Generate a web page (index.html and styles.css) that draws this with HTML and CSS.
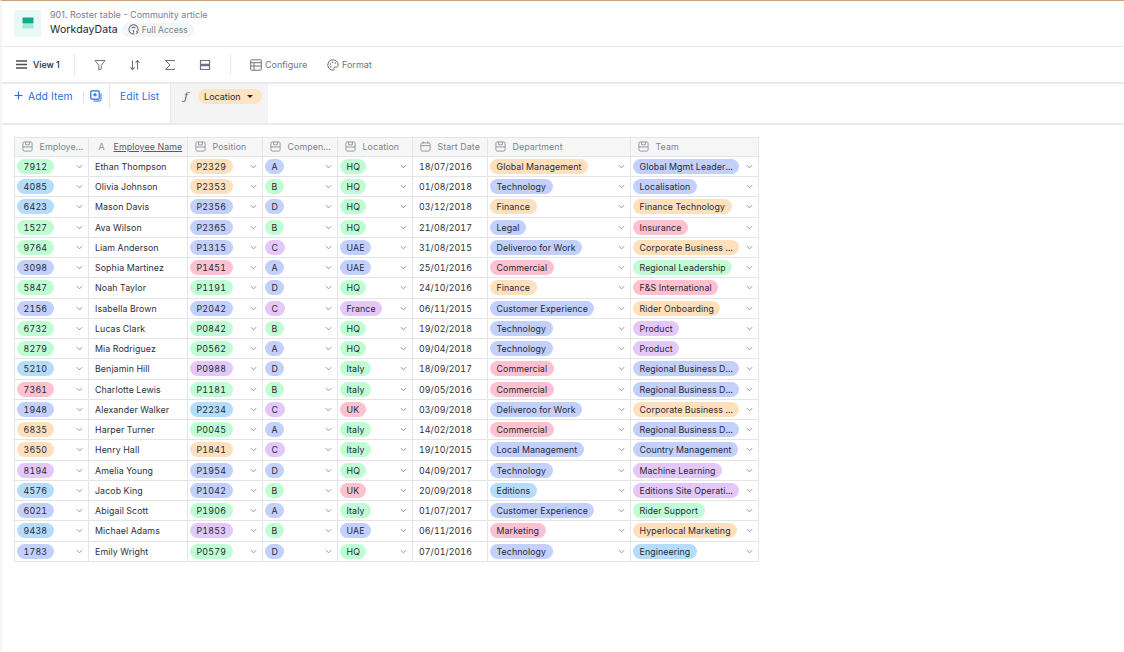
FILE: index.html
```html
<!DOCTYPE html>
<html lang="en">
<head>
<meta charset="utf-8">
<title>WorkdayData</title>
<link rel="stylesheet" href="styles.css">
</head>
<body>
<svg class="defs" width="0" height="0" aria-hidden="true">
  <symbol id="chev" viewBox="0 0 8 5"><path d="M1 1l3 3 3-3" fill="none" stroke="#7f8794" stroke-width="1"/></symbol>
  <symbol id="grid" viewBox="0 0 12 12"><path d="M2.500 1h7A1.500 1.500 0 0 1 11 2.500v7A1.500 1.500 0 0 1 9.500 11h-7A1.500 1.500 0 0 1 1 9.500v-7A1.500 1.500 0 0 1 2.500 1zM1 6.500h10M4 1v3.200h4V1" fill="none" stroke="#8b919c" stroke-width="1"/></symbol>
  <symbol id="cal" viewBox="0 0 12 12"><path d="M2.500 2h7A1.500 1.500 0 0 1 11 3.500v6A1.500 1.500 0 0 1 9.500 11h-7A1.500 1.500 0 0 1 1 9.500v-6A1.500 1.500 0 0 1 2.500 2zM1 5h10M3.500 .5v2.500M8.500 .5v2.500" fill="none" stroke="#8b919c" stroke-width="1"/></symbol>
</svg>
<div class="app">
  <header class="head">
    <div class="logo">
      <svg width="12" height="12" viewBox="0 0 12 12"><rect x="0.500" y="0.500" width="11" height="6" rx="0.800" fill="#0fae8a"/><rect x="0.500" y="7" width="11" height="4.500" rx="0.800" fill="#a8e8d6"/></svg>
    </div>
    <div class="titles">
      <div class="crumb">901. Roster table - Community article</div>
      <div class="title-row">
        <span class="title">WorkdayData</span>
        <span class="access">
          <svg width="11" height="11" viewBox="0 0 12 12"><path d="M7 10.800A5 5 0 1 1 11 6c0 .5-.1 1-.2 1.400M4 4.500a2.800 2.800 0 0 1 4 0M6 6.500v3M9 7.500l1.500 1.500-1.500 1.500" fill="none" stroke="#5f6773" stroke-width="1.100"/></svg>
          Full Access
        </span>
      </div>
    </div>
  </header>
  <nav class="tools">
    <div class="view">
      <svg width="11" height="9" viewBox="0 0 11 9"><path d="M0 1h11M0 4.500h11M0 8h11" stroke="#4a505a" stroke-width="1.300"/></svg>
      <span>View 1</span>
    </div>
    <span class="vsep"></span>
    <div class="icons">
      <svg width="12" height="12" viewBox="0 0 12 12"><path d="M1 1.500h10L7.300 6.300v3.500L4.800 11V6.300z" fill="none" stroke="#6b7280" stroke-width="1"/></svg>
      <svg width="12" height="12" viewBox="0 0 12 12"><path d="M3.500 1.500v9M1.500 8.300l2 2.200 2-2.200M8.500 10.500v-9M6.500 3.700l2-2.200 2 2.200" fill="none" stroke="#6b7280" stroke-width="1.100"/></svg>
      <svg width="12" height="12" viewBox="0 0 12 12"><path d="M10.500 2.500V1.500h-9L6 6l-4.500 4.500h9V9.500" fill="none" stroke="#6b7280" stroke-width="1"/></svg>
      <svg width="12" height="12" viewBox="0 0 12 12"><path d="M1.500 1.500h9v3.800h-9zM1.500 6.700h9v3.800h-9z" fill="none" stroke="#6b7280" stroke-width="1.200"/></svg>
    </div>
    <span class="vsep"></span>
    <div class="tool first">
      <svg width="12" height="12" viewBox="0 0 12 12"><path d="M1.500 .8h9a.8.800 0 0 1 .8.800v8.800a.8.800 0 0 1-.8.800h-9a.8.800 0 0 1-.8-.8V1.600a.8.800 0 0 1 .8-.8zM.8 3.700h10.400M.8 7h10.400M4 3.700v7.500" fill="none" stroke="#6b7280" stroke-width="1"/></svg>
      <span>Configure</span>
    </div>
    <div class="tool">
      <svg width="12" height="12" viewBox="0 0 12 12"><path d="M6 .8a5.200 5.200 0 1 0 0 10.400c1 0 1.300-.7 1-1.400-.4-.9 0-1.700 1-1.700h1.500c1 0 1.700-.7 1.700-1.900C11.200 3 8.900.8 6 .8z" fill="none" stroke="#6b7280" stroke-width="1"/><circle cx="3.500" cy="5" r=".8" fill="#6b7280"/><circle cx="5.700" cy="3.200" r=".8" fill="#6b7280"/><circle cx="8.300" cy="4" r=".8" fill="#6b7280"/><circle cx="3.800" cy="7.800" r=".8" fill="#6b7280"/></svg>
      <span>Format</span>
    </div>
  </nav>
  <section class="listbar">
    <div class="add">
      <svg width="9" height="9" viewBox="0 0 9 9"><path d="M4.500 .5v8M.5 4.500h8" stroke="#1f6fe5" stroke-width="1.200"/></svg>
      <span>Add Item</span>
    </div>
    <span class="thin"></span>
    <div class="copy">
      <svg width="12" height="12" viewBox="0 0 12 12"><path d="M1.800.8h6.400a1 1 0 0 1 1 1v6.400a1 1 0 0 1-1 1H1.800a1 1 0 0 1-1-1V1.800a1 1 0 0 1 1-1zM5 3v3.500M3.200 4.800h3.600" fill="none" stroke="#1f6fe5" stroke-width="1.200"/><path d="M11 3.500v6a1.500 1.500 0 0 1-1.500 1.500h-6" fill="none" stroke="#1f6fe5" stroke-width="1"/></svg>
    </div>
    <div class="edit">Edit List</div>
    <div class="formula">
      <span class="fx">&#402;</span>
      <span class="chip">Location <i class="caret"></i></span>
    </div>
    <div class="rest"><div class="input"></div></div>
  </section>
  <main class="content">
    <div class="table">
      <div class="th"><svg class="ci"><use href="#grid"/></svg><span class="thl">Employe...</span></div>
      <div class="th"><span class="a">A</span><span class="thl u">Employee Name</span></div>
      <div class="th"><svg class="ci"><use href="#grid"/></svg><span class="thl">Position</span></div>
      <div class="th"><svg class="ci"><use href="#grid"/></svg><span class="thl">Compen...</span></div>
      <div class="th"><svg class="ci"><use href="#grid"/></svg><span class="thl">Location</span></div>
      <div class="th"><svg class="ci"><use href="#cal"/></svg><span class="thl">Start Date</span></div>
      <div class="th"><svg class="ci"><use href="#grid"/></svg><span class="thl">Department</span></div>
      <div class="th"><svg class="ci"><use href="#grid"/></svg><span class="thl">Team</span></div>

      <div class="td s"><span class="p g num">7912</span><svg class="ch"><use href="#chev"/></svg></div><div class="td t">Ethan Thompson</div><div class="td s"><span class="p o pos">P2329</span><svg class="ch"><use href="#chev"/></svg></div><div class="td s"><span class="p i">A</span><svg class="ch"><use href="#chev"/></svg></div><div class="td s"><span class="p g">HQ</span><svg class="ch"><use href="#chev"/></svg></div><div class="td t">18/07/2016</div><div class="td s"><span class="p o">Global Management</span><svg class="ch"><use href="#chev"/></svg></div><div class="td s"><span class="p i">Global Mgmt Leader...</span><svg class="ch"><use href="#chev"/></svg></div>

      <div class="td s"><span class="p b num">4085</span><svg class="ch"><use href="#chev"/></svg></div><div class="td t">Olivia Johnson</div><div class="td s"><span class="p o pos">P2353</span><svg class="ch"><use href="#chev"/></svg></div><div class="td s"><span class="p g">B</span><svg class="ch"><use href="#chev"/></svg></div><div class="td s"><span class="p g">HQ</span><svg class="ch"><use href="#chev"/></svg></div><div class="td t">01/08/2018</div><div class="td s"><span class="p i">Technology</span><svg class="ch"><use href="#chev"/></svg></div><div class="td s"><span class="p i">Localisation</span><svg class="ch"><use href="#chev"/></svg></div>

      <div class="td s"><span class="p b num">6423</span><svg class="ch"><use href="#chev"/></svg></div><div class="td t">Mason Davis</div><div class="td s"><span class="p i pos">P2356</span><svg class="ch"><use href="#chev"/></svg></div><div class="td s"><span class="p i">D</span><svg class="ch"><use href="#chev"/></svg></div><div class="td s"><span class="p g">HQ</span><svg class="ch"><use href="#chev"/></svg></div><div class="td t">03/12/2018</div><div class="td s"><span class="p o">Finance</span><svg class="ch"><use href="#chev"/></svg></div><div class="td s"><span class="p o">Finance Technology</span><svg class="ch"><use href="#chev"/></svg></div>

      <div class="td s"><span class="p g num">1527</span><svg class="ch"><use href="#chev"/></svg></div><div class="td t">Ava Wilson</div><div class="td s"><span class="p i pos">P2365</span><svg class="ch"><use href="#chev"/></svg></div><div class="td s"><span class="p g">B</span><svg class="ch"><use href="#chev"/></svg></div><div class="td s"><span class="p g">HQ</span><svg class="ch"><use href="#chev"/></svg></div><div class="td t">21/08/2017</div><div class="td s"><span class="p i">Legal</span><svg class="ch"><use href="#chev"/></svg></div><div class="td s"><span class="p r">Insurance</span><svg class="ch"><use href="#chev"/></svg></div>

      <div class="td s"><span class="p g num">9764</span><svg class="ch"><use href="#chev"/></svg></div><div class="td t">Liam Anderson</div><div class="td s"><span class="p i pos">P1315</span><svg class="ch"><use href="#chev"/></svg></div><div class="td s"><span class="p v">C</span><svg class="ch"><use href="#chev"/></svg></div><div class="td s"><span class="p i">UAE</span><svg class="ch"><use href="#chev"/></svg></div><div class="td t">31/08/2015</div><div class="td s"><span class="p i">Deliveroo for Work</span><svg class="ch"><use href="#chev"/></svg></div><div class="td s"><span class="p o">Corporate Business ...</span><svg class="ch"><use href="#chev"/></svg></div>

      <div class="td s"><span class="p i num">3098</span><svg class="ch"><use href="#chev"/></svg></div><div class="td t">Sophia Martinez</div><div class="td s"><span class="p r pos">P1451</span><svg class="ch"><use href="#chev"/></svg></div><div class="td s"><span class="p i">A</span><svg class="ch"><use href="#chev"/></svg></div><div class="td s"><span class="p i">UAE</span><svg class="ch"><use href="#chev"/></svg></div><div class="td t">25/01/2016</div><div class="td s"><span class="p r">Commercial</span><svg class="ch"><use href="#chev"/></svg></div><div class="td s"><span class="p g">Regional Leadership</span><svg class="ch"><use href="#chev"/></svg></div>

      <div class="td s"><span class="p g num">5847</span><svg class="ch"><use href="#chev"/></svg></div><div class="td t">Noah Taylor</div><div class="td s"><span class="p g pos">P1191</span><svg class="ch"><use href="#chev"/></svg></div><div class="td s"><span class="p i">D</span><svg class="ch"><use href="#chev"/></svg></div><div class="td s"><span class="p g">HQ</span><svg class="ch"><use href="#chev"/></svg></div><div class="td t">24/10/2016</div><div class="td s"><span class="p o">Finance</span><svg class="ch"><use href="#chev"/></svg></div><div class="td s"><span class="p r">F&amp;S International</span><svg class="ch"><use href="#chev"/></svg></div>

      <div class="td s"><span class="p i num">2156</span><svg class="ch"><use href="#chev"/></svg></div><div class="td t">Isabella Brown</div><div class="td s"><span class="p i pos">P2042</span><svg class="ch"><use href="#chev"/></svg></div><div class="td s"><span class="p v">C</span><svg class="ch"><use href="#chev"/></svg></div><div class="td s"><span class="p v">France</span><svg class="ch"><use href="#chev"/></svg></div><div class="td t">06/11/2015</div><div class="td s"><span class="p i">Customer Experience</span><svg class="ch"><use href="#chev"/></svg></div><div class="td s"><span class="p o">Rider Onboarding</span><svg class="ch"><use href="#chev"/></svg></div>

      <div class="td s"><span class="p g num">6732</span><svg class="ch"><use href="#chev"/></svg></div><div class="td t">Lucas Clark</div><div class="td s"><span class="p g pos">P0842</span><svg class="ch"><use href="#chev"/></svg></div><div class="td s"><span class="p g">B</span><svg class="ch"><use href="#chev"/></svg></div><div class="td s"><span class="p g">HQ</span><svg class="ch"><use href="#chev"/></svg></div><div class="td t">19/02/2018</div><div class="td s"><span class="p i">Technology</span><svg class="ch"><use href="#chev"/></svg></div><div class="td s"><span class="p v">Product</span><svg class="ch"><use href="#chev"/></svg></div>

      <div class="td s"><span class="p g num">8279</span><svg class="ch"><use href="#chev"/></svg></div><div class="td t">Mia Rodriguez</div><div class="td s"><span class="p g pos">P0562</span><svg class="ch"><use href="#chev"/></svg></div><div class="td s"><span class="p i">A</span><svg class="ch"><use href="#chev"/></svg></div><div class="td s"><span class="p g">HQ</span><svg class="ch"><use href="#chev"/></svg></div><div class="td t">09/04/2018</div><div class="td s"><span class="p i">Technology</span><svg class="ch"><use href="#chev"/></svg></div><div class="td s"><span class="p v">Product</span><svg class="ch"><use href="#chev"/></svg></div>

      <div class="td s"><span class="p b num">5210</span><svg class="ch"><use href="#chev"/></svg></div><div class="td t">Benjamin Hill</div><div class="td s"><span class="p v pos">P0988</span><svg class="ch"><use href="#chev"/></svg></div><div class="td s"><span class="p i">D</span><svg class="ch"><use href="#chev"/></svg></div><div class="td s"><span class="p g">Italy</span><svg class="ch"><use href="#chev"/></svg></div><div class="td t">18/09/2017</div><div class="td s"><span class="p r">Commercial</span><svg class="ch"><use href="#chev"/></svg></div><div class="td s"><span class="p i">Regional Business D...</span><svg class="ch"><use href="#chev"/></svg></div>

      <div class="td s"><span class="p r num">7361</span><svg class="ch"><use href="#chev"/></svg></div><div class="td t">Charlotte Lewis</div><div class="td s"><span class="p g pos">P1181</span><svg class="ch"><use href="#chev"/></svg></div><div class="td s"><span class="p g">B</span><svg class="ch"><use href="#chev"/></svg></div><div class="td s"><span class="p g">Italy</span><svg class="ch"><use href="#chev"/></svg></div><div class="td t">09/05/2016</div><div class="td s"><span class="p r">Commercial</span><svg class="ch"><use href="#chev"/></svg></div><div class="td s"><span class="p i">Regional Business D...</span><svg class="ch"><use href="#chev"/></svg></div>

      <div class="td s"><span class="p i num">1948</span><svg class="ch"><use href="#chev"/></svg></div><div class="td t">Alexander Walker</div><div class="td s"><span class="p b pos">P2234</span><svg class="ch"><use href="#chev"/></svg></div><div class="td s"><span class="p v">C</span><svg class="ch"><use href="#chev"/></svg></div><div class="td s"><span class="p r">UK</span><svg class="ch"><use href="#chev"/></svg></div><div class="td t">03/09/2018</div><div class="td s"><span class="p i">Deliveroo for Work</span><svg class="ch"><use href="#chev"/></svg></div><div class="td s"><span class="p o">Corporate Business ...</span><svg class="ch"><use href="#chev"/></svg></div>

      <div class="td s"><span class="p o num">6835</span><svg class="ch"><use href="#chev"/></svg></div><div class="td t">Harper Turner</div><div class="td s"><span class="p g pos">P0045</span><svg class="ch"><use href="#chev"/></svg></div><div class="td s"><span class="p i">A</span><svg class="ch"><use href="#chev"/></svg></div><div class="td s"><span class="p g">Italy</span><svg class="ch"><use href="#chev"/></svg></div><div class="td t">14/02/2018</div><div class="td s"><span class="p r">Commercial</span><svg class="ch"><use href="#chev"/></svg></div><div class="td s"><span class="p i">Regional Business D...</span><svg class="ch"><use href="#chev"/></svg></div>

      <div class="td s"><span class="p o num">3650</span><svg class="ch"><use href="#chev"/></svg></div><div class="td t">Henry Hall</div><div class="td s"><span class="p o pos">P1841</span><svg class="ch"><use href="#chev"/></svg></div><div class="td s"><span class="p v">C</span><svg class="ch"><use href="#chev"/></svg></div><div class="td s"><span class="p g">Italy</span><svg class="ch"><use href="#chev"/></svg></div><div class="td t">19/10/2015</div><div class="td s"><span class="p i">Local Management</span><svg class="ch"><use href="#chev"/></svg></div><div class="td s"><span class="p i">Country Management</span><svg class="ch"><use href="#chev"/></svg></div>

      <div class="td s"><span class="p v num">8194</span><svg class="ch"><use href="#chev"/></svg></div><div class="td t">Amelia Young</div><div class="td s"><span class="p i pos">P1954</span><svg class="ch"><use href="#chev"/></svg></div><div class="td s"><span class="p i">D</span><svg class="ch"><use href="#chev"/></svg></div><div class="td s"><span class="p g">HQ</span><svg class="ch"><use href="#chev"/></svg></div><div class="td t">04/09/2017</div><div class="td s"><span class="p i">Technology</span><svg class="ch"><use href="#chev"/></svg></div><div class="td s"><span class="p v">Machine Learning</span><svg class="ch"><use href="#chev"/></svg></div>

      <div class="td s"><span class="p b num">4576</span><svg class="ch"><use href="#chev"/></svg></div><div class="td t">Jacob King</div><div class="td s"><span class="p i pos">P1042</span><svg class="ch"><use href="#chev"/></svg></div><div class="td s"><span class="p g">B</span><svg class="ch"><use href="#chev"/></svg></div><div class="td s"><span class="p r">UK</span><svg class="ch"><use href="#chev"/></svg></div><div class="td t">20/09/2018</div><div class="td s"><span class="p b">Editions</span><svg class="ch"><use href="#chev"/></svg></div><div class="td s"><span class="p v">Editions Site Operati...</span><svg class="ch"><use href="#chev"/></svg></div>

      <div class="td s"><span class="p i num">6021</span><svg class="ch"><use href="#chev"/></svg></div><div class="td t">Abigail Scott</div><div class="td s"><span class="p g pos">P1906</span><svg class="ch"><use href="#chev"/></svg></div><div class="td s"><span class="p i">A</span><svg class="ch"><use href="#chev"/></svg></div><div class="td s"><span class="p g">Italy</span><svg class="ch"><use href="#chev"/></svg></div><div class="td t">01/07/2017</div><div class="td s"><span class="p i">Customer Experience</span><svg class="ch"><use href="#chev"/></svg></div><div class="td s"><span class="p g">Rider Support</span><svg class="ch"><use href="#chev"/></svg></div>

      <div class="td s"><span class="p b num">9438</span><svg class="ch"><use href="#chev"/></svg></div><div class="td t">Michael Adams</div><div class="td s"><span class="p v pos">P1853</span><svg class="ch"><use href="#chev"/></svg></div><div class="td s"><span class="p g">B</span><svg class="ch"><use href="#chev"/></svg></div><div class="td s"><span class="p i">UAE</span><svg class="ch"><use href="#chev"/></svg></div><div class="td t">06/11/2016</div><div class="td s"><span class="p r">Marketing</span><svg class="ch"><use href="#chev"/></svg></div><div class="td s"><span class="p o">Hyperlocal Marketing</span><svg class="ch"><use href="#chev"/></svg></div>

      <div class="td s"><span class="p i num">1783</span><svg class="ch"><use href="#chev"/></svg></div><div class="td t">Emily Wright</div><div class="td s"><span class="p g pos">P0579</span><svg class="ch"><use href="#chev"/></svg></div><div class="td s"><span class="p i">D</span><svg class="ch"><use href="#chev"/></svg></div><div class="td s"><span class="p g">HQ</span><svg class="ch"><use href="#chev"/></svg></div><div class="td t">07/01/2016</div><div class="td s"><span class="p i">Technology</span><svg class="ch"><use href="#chev"/></svg></div><div class="td s"><span class="p b">Engineering</span><svg class="ch"><use href="#chev"/></svg></div>
    </div>
  </main>
</div>
</body>
</html>
```
FILE: styles.css
```css
* { box-sizing: border-box; }
html, body { margin: 0; height: 100%; background: #fff; }
body { font-family: Inter, "Liberation Sans", sans-serif; color: #1f2430; overflow: hidden; }
.defs { position: absolute; }
.app { height: 652px; border-top: 1px solid #cfa27e; border-left: 2px solid #f5f5f6; display: flex; flex-direction: column; }

.head { height: 46px; border-bottom: 1px solid #e6e7ea; display: flex; align-items: center; padding: 0 0 1px 12px; gap: 9px; flex: none; }
.logo { width: 27px; height: 27px; border-radius: 3px; background: #e8f8f4; display: flex; align-items: center; justify-content: center; }
.titles { display: flex; flex-direction: column; gap: 1px; }
.crumb { font-size: 9px; line-height: 12px; color: #7a808b; }
.title-row { display: flex; align-items: center; gap: 4px; }
.title { font-size: 10.500px; line-height: 15px; color: #1d2230; letter-spacing: .1px; }
.access { display: inline-flex; align-items: center; gap: 3px; height: 14px; padding: 0 6px 0 6px; border-radius: 7px; background: #f4f5f6; font-size: 8.500px; color: #80868f; }

.tools { height: 37px; border-bottom: 2px solid #eaebed; display: flex; align-items: center; flex: none; padding-left: 14px; }
.view { display: flex; align-items: center; gap: 6px; font-size: 8.800px; font-weight: 450; width: 58px; color: #222733; }
.vsep { width: 1px; height: 21px; background: #e6e7ea; }
.icons { display: flex; gap: 23px; padding-left: 19px; width: 155px; }
.tool { display: flex; align-items: center; gap: 3px; font-size: 9px; color: #6f7580; }
.first { margin-left: 19px; width: 77px; }

.listbar { height: 41px; border-bottom: 2px solid #eaebed; display: flex; align-items: flex-start; flex: none; padding-left: 12px; color: #1f6fe5; font-size: 10.300px; }
.add { display: flex; align-items: center; gap: 5px; height: 23px; width: 69px; letter-spacing: .1px; }
.thin { width: 1px; height: 12px; background: #e0e2e6; margin-top: 7px; }
.copy { width: 26px; height: 24px; padding: 6px 0 0 6px; border-right: 1px solid #e6e7ea; }
.copy svg { display: block; }
.edit { padding: 1px 0 0 10px; width: 60px; height: 24px; line-height: 23px; letter-spacing: .1px; }
.formula { width: 98px; height: 39px; background: #f4f4f5; border-left: 1px solid #e6e7ea; display: flex; align-items: flex-start; padding: 5px 0 0 13px; gap: 10px; flex: none; }
.fx { font-family: "DejaVu Serif", serif; font-style: italic; font-size: 11px; color: #555b66; line-height: 15px; }
.chip { display: inline-flex; align-items: center; gap: 6px; height: 15px; padding: 0 9px 0 6px; border-radius: 8px; background: #ffe3c4; font-size: 9px; color: #2a2d36; }
.caret { width: 0; height: 0; border-left: 3px solid transparent; border-right: 3px solid transparent; border-top: 3px solid #222; }
.rest { flex: 1; height: 39px; background: #fbfbfc; padding-top: 3px; }
.input { height: 35px; background: #fff; }

.content { padding: 12px 0 0 12px; }
.table { display: grid; width: 745px; grid-template-columns: 74px 99px 75px 75px 75px 75px 143px 128px; grid-template-rows: 18.750px repeat(20, 20.250px); border-top: 1px solid #e3e5e9; border-left: 1px solid #e3e5e9; font-size: 8.800px; font-variant-numeric: tabular-nums; }
.th { background: #f6f6f7; border-right: 1px solid #e3e5e9; border-bottom: 1px solid #e3e5e9; display: flex; align-items: center; padding: 0 0 1px 7px; gap: 6.500px; color: #7c828d; font-size: 8.800px; white-space: nowrap; }
.ci { width: 11px; height: 11px; flex: none; }
.a { width: 11px; text-align: center; color: #8b919c; font-size: 8.800px; }
.u { color: #555b66; text-decoration: underline; }
.thl { letter-spacing: .1px; }
.td { border-right: 1px solid #e3e5e9; border-bottom: 1px solid #e3e5e9; display: flex; align-items: center; white-space: nowrap; color: #2c313c; letter-spacing: .1px; }
.t { padding-left: 6px; }
.s { padding: 0 5.500px 0 2px; justify-content: space-between; }
.p { display: inline-flex; align-items: center; height: 15px; padding: 0 6.500px; border-radius: 8px; color: #262a35; }
.num, .pos { letter-spacing: .25px; }
.ch { width: 7px; height: 5px; flex: none; }
.g { background: #c1fdd4; }
.b { background: #b5dcfa; }
.i { background: #c3d0fb; }
.o { background: #ffe0bd; }
.r { background: #ffc1cf; }
.v { background: #e4c8fa; }
```
